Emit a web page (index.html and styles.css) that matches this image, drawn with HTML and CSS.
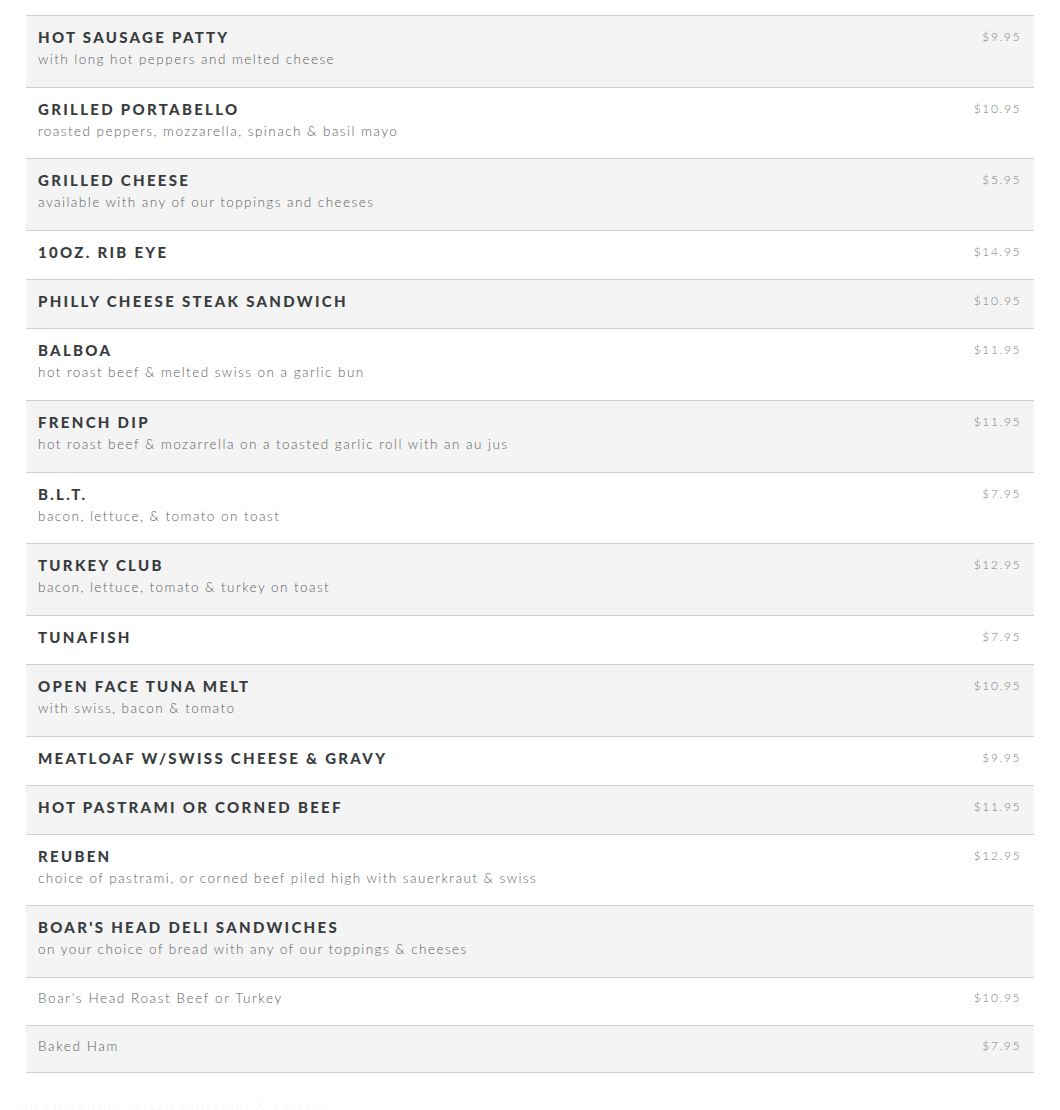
FILE: index.html
```html
<!DOCTYPE html>
<html lang="en">
<head>
<meta charset="utf-8">
<title>Menu</title>
<link rel="stylesheet" href="styles.css">
</head>
<body>
<div class="menu">
  <div class="item alt">
    <div class="head"><span class="name">Hot Sausage Patty</span><span class="price">$9.95</span></div>
    <div class="desc">with long hot peppers and melted cheese</div>
  </div>
  <div class="item">
    <div class="head"><span class="name">Grilled Portabello</span><span class="price">$10.95</span></div>
    <div class="desc">roasted peppers, mozzarella, spinach &amp; basil mayo</div>
  </div>
  <div class="item alt">
    <div class="head"><span class="name">Grilled Cheese</span><span class="price">$5.95</span></div>
    <div class="desc">available with any of our toppings and cheeses</div>
  </div>
  <div class="item">
    <div class="head"><span class="name">10oz. Rib Eye</span><span class="price">$14.95</span></div>
  </div>
  <div class="item alt">
    <div class="head"><span class="name">Philly Cheese Steak Sandwich</span><span class="price">$10.95</span></div>
  </div>
  <div class="item">
    <div class="head"><span class="name">Balboa</span><span class="price">$11.95</span></div>
    <div class="desc">hot roast beef &amp; melted swiss on a garlic bun</div>
  </div>
  <div class="item alt">
    <div class="head"><span class="name">French Dip</span><span class="price">$11.95</span></div>
    <div class="desc">hot roast beef &amp; mozarrella on a toasted garlic roll with an au jus</div>
  </div>
  <div class="item">
    <div class="head"><span class="name">B.L.T.</span><span class="price">$7.95</span></div>
    <div class="desc">bacon, lettuce, &amp; tomato on toast</div>
  </div>
  <div class="item alt">
    <div class="head"><span class="name">Turkey Club</span><span class="price">$12.95</span></div>
    <div class="desc">bacon, lettuce, tomato &amp; turkey on toast</div>
  </div>
  <div class="item">
    <div class="head"><span class="name">Tunafish</span><span class="price">$7.95</span></div>
  </div>
  <div class="item alt">
    <div class="head"><span class="name">Open Face Tuna Melt</span><span class="price">$10.95</span></div>
    <div class="desc">with swiss, bacon &amp; tomato</div>
  </div>
  <div class="item">
    <div class="head"><span class="name">Meatloaf w/Swiss Cheese &amp; Gravy</span><span class="price">$9.95</span></div>
  </div>
  <div class="item alt">
    <div class="head"><span class="name">Hot Pastrami or Corned Beef</span><span class="price">$11.95</span></div>
  </div>
  <div class="item">
    <div class="head"><span class="name">Reuben</span><span class="price">$12.95</span></div>
    <div class="desc">choice of pastrami, or corned beef piled high with sauerkraut &amp; swiss</div>
  </div>
  <div class="item alt">
    <div class="head"><span class="name">Boar's Head Deli Sandwiches</span><span class="price"></span></div>
    <div class="desc">on your choice of bread with any of our toppings &amp; cheeses</div>
  </div>
  <div class="item sub">
    <div class="head"><span class="subname">Boar's Head Roast Beef or Turkey</span><span class="price">$10.95</span></div>
  </div>
  <div class="item sub alt last">
    <div class="head"><span class="subname">Baked Ham</span><span class="price">$7.95</span></div>
  </div>
</div>
<div class="footnote">all sandwiches served with chips &amp; a pickle</div>
</body>
</html>
```
FILE: styles.css
```css
html, body {
  margin: 0;
  padding: 0;
  background: #ffffff;
  font-family: Lato, "Open Sans", "Liberation Sans", sans-serif;
}

.menu {
  margin: 15px 26px 0;
}

.item {
  border-top: 1px solid #cfd0cf;
  padding: 10px 13px 16px 12px;
  background: #ffffff;
}

.item.alt {
  background: #f3f4f3;
}

.item.last {
  border-bottom: 1px solid #cfd0cf;
}

.head {
  display: flex;
  justify-content: space-between;
  align-items: center;
  height: 22px;
}

.name {
  font-size: 15px;
  font-weight: 900;
  line-height: 22px;
  text-transform: uppercase;
  letter-spacing: 2.3px;
  color: #393c3e;
}

.subname {
  font-size: 13.5px;
  font-weight: 300;
  line-height: 22px;
  letter-spacing: 1.6px;
  color: #5e6062;
}

.price {
  font-size: 12px;
  font-weight: 300;
  line-height: 22px;
  letter-spacing: 1.6px;
  color: #7d7f81;
}

.desc {
  font-size: 13.5px;
  font-weight: 300;
  line-height: 22.7px;
  letter-spacing: 1.45px;
  color: #5e6062;
}

.item.sub {
  padding-top: 9px;
  padding-bottom: 15.5px;
}

.footnote {
  margin: 26px 0 0 22px;
  font-size: 13px;
  font-weight: 300;
  letter-spacing: 1.5px;
  color: #f4f4f4;
}
```
